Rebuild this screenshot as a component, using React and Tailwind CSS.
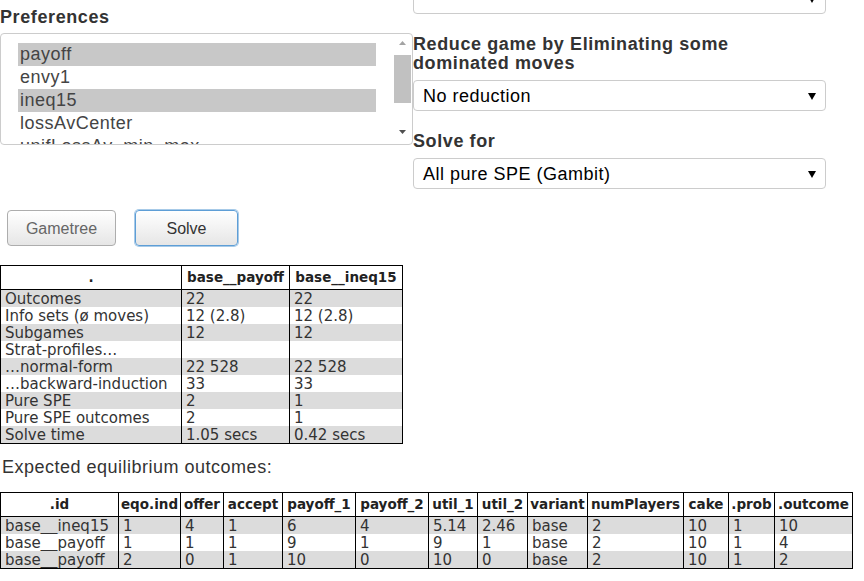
import React from "react";

const prefs = [
  { name: "payoff", selected: true },
  { name: "envy1", selected: false },
  { name: "ineq15", selected: true },
  { name: "lossAvCenter", selected: false },
  { name: "unifLossAv_min_max", selected: false },
];

const summaryCols = [
  { label: ".", width: "w-[181px]" },
  { label: "base__payoff", width: "w-[108px]" },
  { label: "base__ineq15", width: "w-[113px]" },
];

const summaryRows = [
  ["Outcomes", "22", "22"],
  ["Info sets (ø moves)", "12 (2.8)", "12 (2.8)"],
  ["Subgames", "12", "12"],
  ["Strat-profiles…", "", ""],
  ["…normal-form", "22 528", "22 528"],
  ["…backward-induction", "33", "33"],
  ["Pure SPE", "2", "1"],
  ["Pure SPE outcomes", "2", "1"],
  ["Solve time", "1.05 secs", "0.42 secs"],
];

const outcomeCols = [
  { label: ".id", width: "w-[118px]" },
  { label: "eqo.ind", width: "w-[62px]" },
  { label: "offer", width: "w-[43px]" },
  { label: "accept", width: "w-[59px]" },
  { label: "payoff_1", width: "w-[73px]" },
  { label: "payoff_2", width: "w-[73px]" },
  { label: "util_1", width: "w-[49px]" },
  { label: "util_2", width: "w-[50px]" },
  { label: "variant", width: "w-[60px]" },
  { label: "numPlayers", width: "w-[96px]" },
  { label: "cake", width: "w-[45px]" },
  { label: ".prob", width: "w-[46px]" },
  { label: ".outcome", width: "w-[78px]" },
];

const outcomeRows = [
  ["base__ineq15", "1", "4", "1", "6", "4", "5.14", "2.46", "base", "2", "10", "1", "10"],
  ["base__payoff", "1", "1", "1", "9", "1", "9", "1", "base", "2", "10", "1", "4"],
  ["base__payoff", "2", "0", "1", "10", "0", "10", "0", "base", "2", "10", "1", "2"],
];

// DejaVu's underscore is a hairline; Liberation's is thick enough to read
const showUnderscores = (text) =>
  text.split(/(_)/).map((part, k) =>
    part === "_" ? (
      <span key={k} className="font-['Liberation_Sans',Arial,sans-serif]">
        _
      </span>
    ) : (
      part
    )
  );

const SelectBox = ({ value, className = "" }) => (
  <div
    className={`flex h-[31px] w-[413px] items-center justify-between rounded-[4px] border border-[#cccccc] bg-white pl-[9px] pr-[9px] pt-[2px] text-[18px] tracking-[0.5px] text-black ${className}`}
  >
    <span>{value}</span>
    <svg width="8" height="7" viewBox="0 0 8 7" className="-mt-[1px]">
      <path d="M0 0 H8 L4 7 Z" fill="#000" />
    </svg>
  </div>
);

const DataTable = ({ cols, rows }) => (
  <table className="table-fixed border-separate border-spacing-0 border-l border-t border-black font-['DejaVu_Sans',Verdana,sans-serif]">
    <thead>
      <tr>
        {cols.map((col) => (
          <th
            key={col.label}
            className={`${col.width} h-[24px] overflow-hidden whitespace-nowrap border-b border-r border-black p-0 text-center text-[13.5px] font-bold leading-[23px] text-[#222]`}
          >
            {col.label}
          </th>
        ))}
      </tr>
    </thead>
    <tbody>
      {rows.map((row, i) => (
        <tr key={i} className={i % 2 === 0 ? "bg-[#dcdcdc]" : "bg-white"}>
          {row.map((cell, j) => (
            <td
              key={j}
              className={`whitespace-nowrap border-r border-black p-0 pl-[4px] pt-[1px] align-top text-[15px] leading-[16px] text-[#333] ${
                i === rows.length - 1 ? "h-[18px] border-b" : "h-[17px]"
              }`}
            >
              {showUnderscores(cell)}
            </td>
          ))}
        </tr>
      ))}
    </tbody>
  </table>
);

export default function App() {
  return (
    <div className="min-h-screen overflow-hidden bg-white font-['Liberation_Sans',Arial,sans-serif] text-[#333]">
      <div className="grid grid-cols-[413px_413px] items-start">
        <div className="pt-[7px]">
          <h4 className="text-[18px] font-bold leading-[20px] tracking-[0.6px]">
            Preferences
          </h4>
          <div className="mt-[6px] flex h-[112px] w-[413px] overflow-hidden rounded-[4px] border border-[#cccccc] bg-white">
            <ul className="flex-1 overflow-hidden pl-[17px] pr-[18px] pt-[9px]">
              {prefs.map((p) => (
                <li
                  key={p.name}
                  className={`h-[23px] whitespace-nowrap pl-[2px] text-[18px] leading-[22px] tracking-[0.5px] text-[#444] ${
                    p.selected ? "bg-[#c8c8c8]" : ""
                  }`}
                >
                  {p.name}
                </li>
              ))}
            </ul>
            <div className="mr-[1px] flex w-[17px] flex-col">
              <div className="flex h-[17px] items-center justify-center">
                <svg width="7" height="4" viewBox="0 0 7 4">
                  <path d="M0 4 L3.5 0 L7 4 Z" fill="#a3a3a3" />
                </svg>
              </div>
              <div className="mt-[4px] h-[48px] bg-[#c1c1c1]" />
              <div className="flex-1" />
              <div className="mb-[4px] flex h-[17px] items-center justify-center">
                <svg width="7" height="4" viewBox="0 0 7 4">
                  <path d="M0 0 L7 0 L3.5 4 Z" fill="#505050" />
                </svg>
              </div>
            </div>
          </div>
        </div>

        <div className="-mt-[17px]">
          <SelectBox value="" />
          <h4 className="mt-[21px] text-[18px] font-bold leading-[19px] tracking-[0.6px]">
            Reduce game by Eliminating some
            <br />
            dominated moves
          </h4>
          <SelectBox value="No reduction" className="mt-[7px]" />
          <h4 className="mt-[20px] text-[18px] font-bold leading-[20px] tracking-[0.6px]">
            Solve for
          </h4>
          <SelectBox value="All pure SPE (Gambit)" className="mt-[7px]" />
        </div>
      </div>

      <div className="mt-[21px] flex items-start gap-[19px] pl-[7px]">
        <button className="h-[36px] w-[109px] rounded-[4px] border border-[#adadad] bg-gradient-to-b from-white to-[#e6e6e6] pt-[2px] text-[16px] text-[#666]">
          Gametree
        </button>
        <button className="h-[36px] w-[103px] rounded-[4px] border border-[#5e9ed6] bg-gradient-to-b from-white to-[#e6e6e6] pt-[2px] text-[16px] text-[#333] shadow-[0_0_0_1px_rgba(94,158,214,0.55)]">
          Solve
        </button>
      </div>

      <div className="mt-[19px]">
        <DataTable cols={summaryCols} rows={summaryRows} />
      </div>

      <p className="mt-[13px] pl-[2px] text-[18px] leading-[20px] tracking-[0.5px] text-[#333]">
        Expected equilibrium outcomes:
      </p>

      <div className="mt-[15px]">
        <DataTable cols={outcomeCols} rows={outcomeRows} />
      </div>
    </div>
  );
}
